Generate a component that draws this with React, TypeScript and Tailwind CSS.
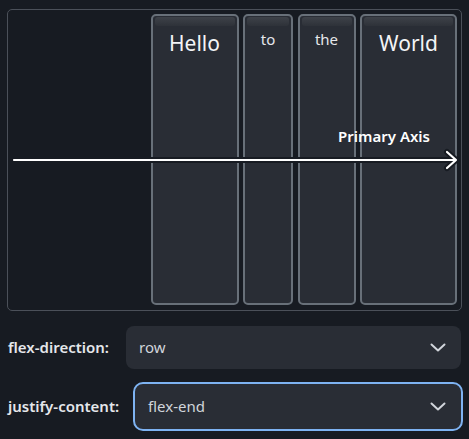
const items = [
  { label: 'Hello', w: 'w-[88px]', big: true },
  { label: 'to', w: 'w-[50px]', big: false },
  { label: 'the', w: 'w-[58px]', big: false },
  { label: 'World', w: 'w-[97px]', big: true },
];

function Chevron() {
  return (
    <svg width="16" height="9" viewBox="0 0 16 9" fill="none" className="shrink-0">
      <path d="M1.5 1.5 L8 7.5 L14.5 1.5" stroke="#d1d5db" strokeWidth="2" strokeLinecap="round" strokeLinejoin="round" />
    </svg>
  );
}

export default function App() {
  return (
    <div className="w-[469px] h-[439px] bg-[#171b22] overflow-hidden pt-[9px] font-['Noto_Sans',sans-serif]">
      {/* Preview */}
      <div className="relative ml-[7px] w-[455px] h-[302px] border border-[#4b5059] rounded-[5px] flex justify-end gap-[4.5px] pt-[4px] pb-[5px] pr-[4px]">
        {items.map((it) => (
          <div
            key={it.label}
            className={`${it.w} h-full bg-[#292d35] border-2 border-[#687079] rounded-[5px] flex flex-col items-center`}
          >
            <div className="self-stretch mx-[2px] mt-[1px] h-[9px] rounded-[3px] bg-gradient-to-b from-[#3e4249] to-[#2e3239]" />
            <span
              className={
                it.big
                  ? 'mt-[3px] text-[21px] leading-[28px] text-[#f3f4f6]'
                  : 'mt-[3px] text-[15px] leading-[20px] text-[#e5e7eb]'
              }
            >
              {it.label}
            </span>
          </div>
        ))}

        <span className="absolute right-[31px] top-[116px] text-[15px] leading-[20px] font-semibold text-white">
          Primary Axis
        </span>

        <svg
          className="absolute left-[4px] top-[138px]"
          width="448"
          height="24"
          viewBox="0 0 448 24"
          fill="none"
        >
          <path d="M2 12 H444 M435 4 L444 12 L435 20" stroke="#171b22" strokeWidth="6" strokeLinecap="round" strokeLinejoin="round" />
          <path d="M2 12 H444 M435 4 L444 12 L435 20" stroke="#ffffff" strokeWidth="2.2" strokeLinecap="round" strokeLinejoin="round" />
        </svg>
      </div>

      {/* Controls */}
      <div className="mt-[15px] flex items-center">
        <label className="ml-[8px] w-[118px] text-[15px] font-semibold text-[#e5e7eb]">flex-direction:</label>
        <div className="w-[335px] h-[43px] bg-[#292d35] rounded-[8px] flex items-center justify-between pl-[13px] pr-[15px]">
          <span className="text-[15px] text-[#d1d5db]">row</span>
          <Chevron />
        </div>
      </div>

      <div className="mt-[13px] flex items-center">
        <label className="ml-[8px] w-[125px] text-[15px] font-semibold text-[#e5e7eb]">justify-content:</label>
        <div className="w-[330px] h-[49px] bg-[#292d35] border-2 border-[#7eb3f2] rounded-[10px] flex items-center justify-between pl-[13px] pr-[15px]">
          <span className="text-[15px] text-[#d1d5db]">flex-end</span>
          <Chevron />
        </div>
      </div>
    </div>
  );
}
